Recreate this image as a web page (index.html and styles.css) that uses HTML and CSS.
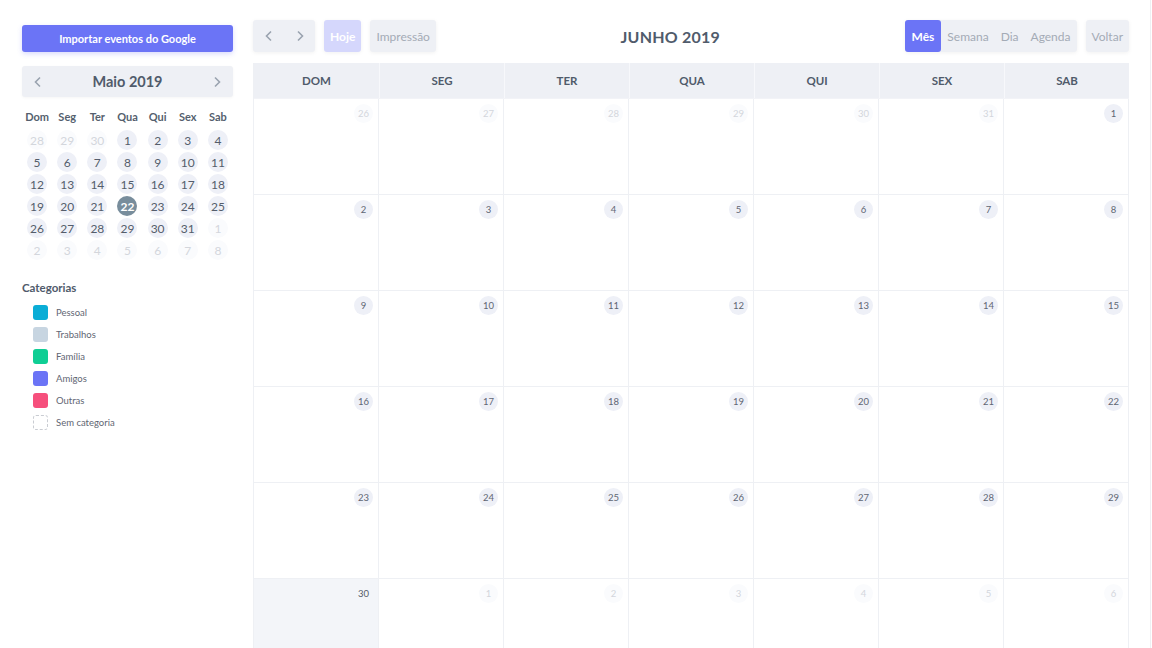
FILE: index.html
```html
<!DOCTYPE html>
<html lang="pt">
<head>
<meta charset="utf-8">
<title>Calendário</title>
<link rel="stylesheet" href="styles.css">
</head>
<body>
<div class="page">
  <aside class="sidebar">
    <button class="btn-import">Importar eventos do Google</button>
    <div class="mini">
      <div class="mini-head">
        <span class="mini-arrow"><svg width="10" height="12" viewBox="0 0 10 12"><path d="M7 1.5 L2.5 6 L7 10.5" fill="none" stroke="#9aa3af" stroke-width="1.6"/></svg></span>
        <span class="mini-title">Maio 2019</span>
        <span class="mini-arrow"><svg width="10" height="12" viewBox="0 0 10 12"><path d="M3 1.5 L7.5 6 L3 10.5" fill="none" stroke="#9aa3af" stroke-width="1.6"/></svg></span>
      </div>
      <div class="mini-week">
        <span>Dom</span><span>Seg</span><span>Ter</span><span>Qua</span><span>Qui</span><span>Sex</span><span>Sab</span>
      </div>
      <div class="mini-days">
        <span class="d off"><i>28</i></span><span class="d off"><i>29</i></span><span class="d off"><i>30</i></span><span class="d"><i>1</i></span><span class="d"><i>2</i></span><span class="d"><i>3</i></span><span class="d"><i>4</i></span>
        <span class="d"><i>5</i></span><span class="d"><i>6</i></span><span class="d"><i>7</i></span><span class="d"><i>8</i></span><span class="d"><i>9</i></span><span class="d"><i>10</i></span><span class="d"><i>11</i></span>
        <span class="d"><i>12</i></span><span class="d"><i>13</i></span><span class="d"><i>14</i></span><span class="d"><i>15</i></span><span class="d"><i>16</i></span><span class="d"><i>17</i></span><span class="d"><i>18</i></span>
        <span class="d"><i>19</i></span><span class="d"><i>20</i></span><span class="d"><i>21</i></span><span class="d today"><i>22</i></span><span class="d"><i>23</i></span><span class="d"><i>24</i></span><span class="d"><i>25</i></span>
        <span class="d"><i>26</i></span><span class="d"><i>27</i></span><span class="d"><i>28</i></span><span class="d"><i>29</i></span><span class="d"><i>30</i></span><span class="d"><i>31</i></span><span class="d off"><i>1</i></span>
        <span class="d off"><i>2</i></span><span class="d off"><i>3</i></span><span class="d off"><i>4</i></span><span class="d off"><i>5</i></span><span class="d off"><i>6</i></span><span class="d off"><i>7</i></span><span class="d off"><i>8</i></span>
      </div>
    </div>
    <div class="cats">
      <div class="cats-title">Categorias</div>
      <div class="cat"><span class="sw sw-pessoal"></span>Pessoal</div>
      <div class="cat"><span class="sw sw-trab"></span>Trabalhos</div>
      <div class="cat"><span class="sw sw-fam"></span>Família</div>
      <div class="cat"><span class="sw sw-amigos"></span>Amigos</div>
      <div class="cat"><span class="sw sw-outras"></span>Outras</div>
      <div class="cat"><span class="sw sw-none"></span>Sem categoria</div>
    </div>
  </aside>

  <main class="main">
    <div class="toolbar">
      <div class="tb-left">
        <div class="group nav">
          <span class="nb"><svg width="10" height="12" viewBox="0 0 10 12"><path d="M7 1.5 L2.5 6 L7 10.5" fill="none" stroke="#9aa3af" stroke-width="1.6"/></svg></span>
          <span class="nb"><svg width="10" height="12" viewBox="0 0 10 12"><path d="M3 1.5 L7.5 6 L3 10.5" fill="none" stroke="#9aa3af" stroke-width="1.6"/></svg></span>
        </div>
        <span class="tbtn hoje">Hoje</span>
        <span class="tbtn">Impressão</span>
      </div>
      <div class="title">JUNHO 2019</div>
      <div class="tb-right">
        <div class="group views">
          <span class="vb active">Mês</span>
          <span class="vb">Semana</span>
          <span class="vb">Dia</span>
          <span class="vb">Agenda</span>
        </div>
        <span class="tbtn">Voltar</span>
      </div>
    </div>

    <div class="cal">
      <div class="cal-head">
        <span>DOM</span><span>SEG</span><span>TER</span><span>QUA</span><span>QUI</span><span>SEX</span><span>SAB</span>
      </div>
      <div class="cal-grid">
        <div class="cell off"><b>26</b></div><div class="cell off"><b>27</b></div><div class="cell off"><b>28</b></div><div class="cell off"><b>29</b></div><div class="cell off"><b>30</b></div><div class="cell off"><b>31</b></div><div class="cell"><b>1</b></div>
        <div class="cell"><b>2</b></div><div class="cell"><b>3</b></div><div class="cell"><b>4</b></div><div class="cell"><b>5</b></div><div class="cell"><b>6</b></div><div class="cell"><b>7</b></div><div class="cell"><b>8</b></div>
        <div class="cell"><b>9</b></div><div class="cell"><b>10</b></div><div class="cell"><b>11</b></div><div class="cell"><b>12</b></div><div class="cell"><b>13</b></div><div class="cell"><b>14</b></div><div class="cell"><b>15</b></div>
        <div class="cell"><b>16</b></div><div class="cell"><b>17</b></div><div class="cell"><b>18</b></div><div class="cell"><b>19</b></div><div class="cell"><b>20</b></div><div class="cell"><b>21</b></div><div class="cell"><b>22</b></div>
        <div class="cell"><b>23</b></div><div class="cell"><b>24</b></div><div class="cell"><b>25</b></div><div class="cell"><b>26</b></div><div class="cell"><b>27</b></div><div class="cell"><b>28</b></div><div class="cell"><b>29</b></div>
        <div class="cell sel"><b>30</b></div><div class="cell off"><b>1</b></div><div class="cell off"><b>2</b></div><div class="cell off"><b>3</b></div><div class="cell off"><b>4</b></div><div class="cell off"><b>5</b></div><div class="cell off"><b>6</b></div>
      </div>
    </div>
  </main>
</div>
</body>
</html>
```

FILE: styles.css
```css
* { box-sizing: border-box; }
html, body { margin: 0; padding: 0; height: 100%; overflow: hidden; background: #fff; }
body { font-family: Lato, "Noto Sans", Arial, sans-serif; color: #4a5568; }

.page {
  display: flex;
  width: 1151px;
  height: 648px;
  border-right: 1px solid #eef0f3;
}

/* Sidebar */
.sidebar { width: 233px; padding: 25px 0 0 22px; flex: none; }
.btn-import {
  display: block; width: 211px; height: 27px;
  border: 0; border-radius: 3px;
  background: #6b74f6; color: #fff;
  font-family: inherit; font-size: 11px; font-weight: 700;
  box-shadow: 0 2px 5px rgba(107,116,246,0.25);
  padding: 0;
}
.mini { margin-top: 14px; width: 211px; }
.mini-head {
  display: flex; align-items: center; justify-content: space-between;
  height: 31px; background: #eef0f5; border-radius: 3px;
  box-shadow: 0 1px 3px rgba(0,0,0,0.04);
}
.mini-arrow { width: 32px; height: 31px; display: flex; align-items: center; justify-content: center; }
.mini-title { font-size: 14.5px; font-weight: 700; color: #505b6b; }
.mini-week {
  display: grid; grid-template-columns: repeat(7, 1fr);
  margin-top: 8px; height: 22px; align-items: center;
  font-size: 11px; font-weight: 700; color: #555f6e; text-align: center;
}
.mini-days { display: grid; grid-template-columns: repeat(7, 1fr); margin-top: 2px; }
.d { height: 22px; display: flex; align-items: center; justify-content: center; }
.d i {
  font-style: normal; width: 20px; height: 20px; border-radius: 50%;
  background: #eef0f7; display: flex; align-items: center; justify-content: center;
  font-size: 12px; color: #545d6b;
}
.d.off i { background: #fafbfd; color: #d3d6dc; }
.d.today i { background: #788d9c; color: #fff; font-weight: 700; }

.cats { margin-top: 19px; }
.cats-title { font-size: 11.5px; font-weight: 700; height: 16px; line-height: 16px; color: #505b6b; margin-bottom: 5px; }
.cat {
  display: flex; align-items: center; height: 22px; padding-left: 11px;
  font-size: 9.5px; color: #5f6673;
}
.sw { width: 15px; height: 15px; border-radius: 3px; margin-right: 8px; flex: none; }
.sw-pessoal { background: #0aadd6; }
.sw-trab { background: #c7d5e1; }
.sw-fam { background: #0fce94; }
.sw-amigos { background: #6b74f6; }
.sw-outras { background: #f64f7c; }
.sw-none { border: 1px dashed #c9ccd2; }

/* Main */
.main { width: 876px; margin-left: 20px; padding-top: 20px; flex: none; }
.toolbar { display: flex; align-items: center; height: 32px; }
.tb-left, .tb-right { display: flex; align-items: center; gap: 9px; }
.title { flex: 1; text-align: center; font-size: 16px; font-weight: 700; color: #505b6b; letter-spacing: 0.2px; }
.group {
  display: flex; height: 32px; background: #eef0f5; border-radius: 3px;
  box-shadow: 0 1px 4px rgba(0,0,0,0.06);
}
.nb { width: 31px; height: 32px; display: flex; align-items: center; justify-content: center; }
.tbtn {
  height: 32px; display: flex; align-items: center; padding: 0 6px;
  background: #eef0f5; border-radius: 3px; font-size: 12px; color: #a4abb6;
  box-shadow: 0 1px 4px rgba(0,0,0,0.06);
}
.tbtn.hoje { background: #d5d7fc; color: #fff; font-weight: 700; padding: 0 6px; }
.vb { height: 32px; display: flex; align-items: center; padding: 0 6px; font-size: 12px; color: #a4abb6; }
.vb.active { background: #6b74f6; color: #fff; font-weight: 700; border-radius: 3px; padding: 0 7px; }

.cal { margin-top: 11px; border-left: 1px solid #eef0f4; }
.cal-head {
  display: grid; grid-template-columns: repeat(7, 1fr);
  height: 35px; background: #eef0f5;
}
.cal-head span {
  display: flex; align-items: center; justify-content: center;
  font-size: 11.5px; font-weight: 700; color: #505b6b;
  border-left: 1px solid #f7f8fb;
}
.cal-head span:first-child { border-left: 0; }
.cal-grid {
  display: grid; grid-template-columns: repeat(7, 1fr); grid-auto-rows: 96px;
  border-top: 1px solid #f2f3f7;
}
.cell {
  border-right: 1px solid #eef0f4; border-bottom: 1px solid #eef0f4;
  padding: 5px 5px 0 0; display: flex; justify-content: flex-end; align-items: flex-start;
}
.cell b {
  font-weight: 400; width: 19px; height: 19px; border-radius: 50%;
  background: #eef0f7; display: flex; align-items: center; justify-content: center;
  font-size: 9.5px; color: #5f6673;
}
.cell.off b { background: #fafbfd; color: #d3d6dc; }
.cell.sel { background: #f3f5f9; }
.cell.sel b { background: transparent; color: #555c68; }
```
